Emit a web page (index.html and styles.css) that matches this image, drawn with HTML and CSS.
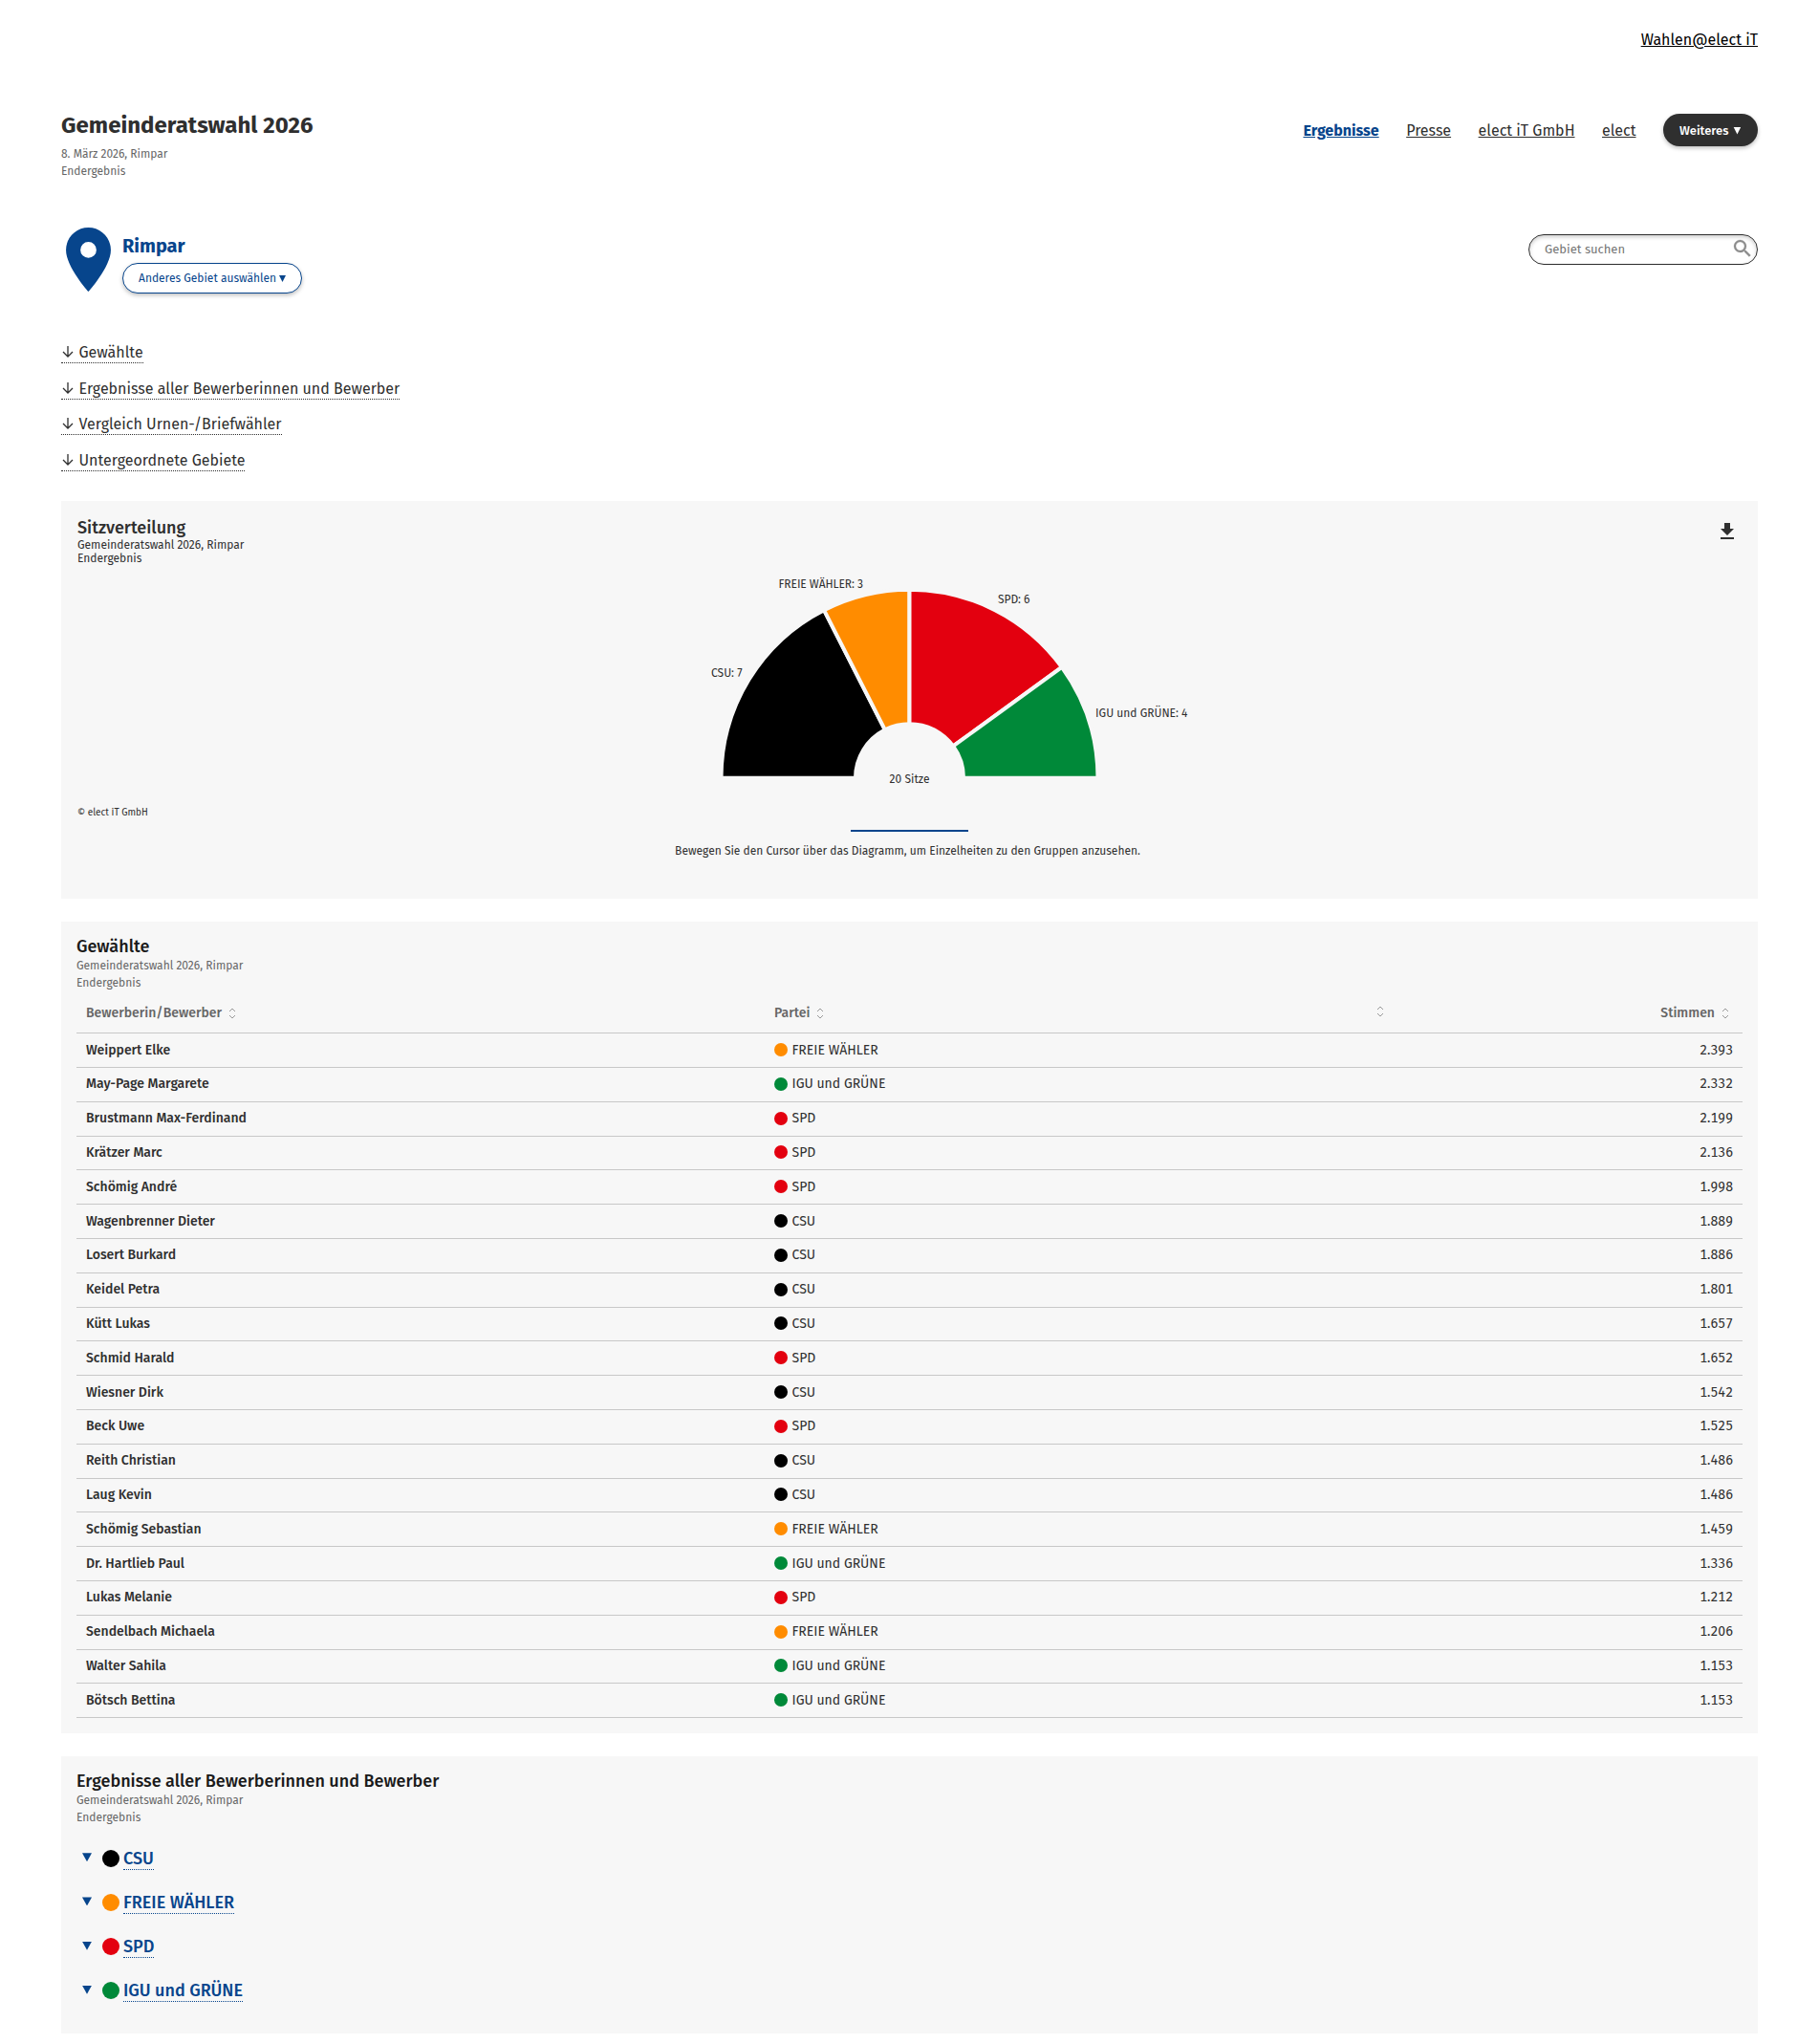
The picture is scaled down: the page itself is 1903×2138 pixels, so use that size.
FILE: index.html
```html
<!DOCTYPE html>
<html lang="de">
<head>
    <meta charset="UTF-8">
    <meta name="viewport" content="width=device-width, initial-scale=1.0">
    <title>Gemeinderatswahl 2026 - Rimpar</title>
    <link rel="stylesheet" href="styles.css">
</head>
<body>
    <div class="topbar"><a href="#">Wahlen@elect iT</a></div>

    <header class="header">
        <div>
            <h1>Gemeinderatswahl 2026</h1>
            <p class="sub">8. März 2026, Rimpar<br>Endergebnis</p>
        </div>
        <nav class="nav">
            <a href="#" class="active">Ergebnisse</a>
            <a href="#">Presse</a>
            <a href="#">elect iT GmbH</a>
            <a href="#">elect</a>
            <button class="more">Weiteres <span class="tri"></span></button>
        </nav>
    </header>

    <div class="area">
        <svg class="pin" viewBox="5 2 14 20"><path d="M12 2C8.13 2 5 5.13 5 9c0 5.25 7 13 7 13s7-7.75 7-13c0-3.87-3.13-7-7-7zm0 9.5a2.5 2.5 0 0 1 0-5 2.5 2.5 0 0 1 0 5z"/></svg>
        <div class="area-name">
            <h2>Rimpar</h2>
            <button class="choose">Anderes Gebiet auswählen <span class="tri"></span></button>
        </div>
        <div class="search">
            <input type="text" placeholder="Gebiet suchen">
            <svg viewBox="0 0 24 24"><path d="M15.5 14h-.79l-.28-.27A6.47 6.47 0 0 0 16 9.5 6.5 6.5 0 1 0 9.5 16c1.61 0 3.09-.59 4.23-1.57l.27.28v.79l5 4.99L20.49 19l-4.99-5zm-6 0C7.01 14 5 11.99 5 9.5S7.01 5 9.5 5 14 7.01 14 9.5 11.99 14 9.5 14z"/></svg>
        </div>
    </div>

    <ul class="jump">
        <li><a href="#gewaehlte"><svg viewBox="0 0 12 12"><path d="M6 0v11M1 6l5 5 5-5"/></svg>Gewählte</a></li>
        <li><a href="#bewerber"><svg viewBox="0 0 12 12"><path d="M6 0v11M1 6l5 5 5-5"/></svg>Ergebnisse aller Bewerberinnen und Bewerber</a></li>
        <li><a href="#"><svg viewBox="0 0 12 12"><path d="M6 0v11M1 6l5 5 5-5"/></svg>Vergleich Urnen-/Briefwähler</a></li>
        <li><a href="#"><svg viewBox="0 0 12 12"><path d="M6 0v11M1 6l5 5 5-5"/></svg>Untergeordnete Gebiete</a></li>
    </ul>

    <section class="panel seats">
        <div class="seats-head">
            <div>
                <h3>Sitzverteilung</h3>
                <p>Gemeinderatswahl 2026, Rimpar<br>Endergebnis</p>
            </div>
            <svg class="download" viewBox="0 0 24 24"><path d="M19 9h-4V3H9v6H5l7 7 7-7zM5 18v2h14v-2H5z"/></svg>
        </div>
        <svg class="chart" viewBox="0 0 520 240">
            <g id="slices" stroke="#f7f7f7" stroke-width="4"></g>
            <text x="122.5" y="20" textLength="88.5">FREIE WÄHLER: 3</text>
            <text x="352" y="36" textLength="33.5">SPD: 6</text>
            <text x="52" y="113" textLength="32.5">CSU: 7</text>
            <text x="454" y="155" textLength="96.5">IGU und GRÜNE: 4</text>
            <text x="238.5" y="224" textLength="42">20 Sitze</text>
        </svg>
        <div class="copy">© elect iT GmbH</div>
        <div class="hint">Bewegen Sie den Cursor über das Diagramm, um Einzelheiten zu den Gruppen anzusehen.</div>
    </section>

    <section class="panel" id="gewaehlte">
        <h3>Gewählte</h3>
        <p class="sub">Gemeinderatswahl 2026, Rimpar<br>Endergebnis</p>
        <table>
            <thead>
                <tr>
                    <th class="c1">Bewerberin/Bewerber<svg class="sort" viewBox="0 0 8 12"><path d="M1 4l3-3 3 3M1 8l3 3 3-3"/></svg></th>
                    <th class="c2">Partei<svg class="sort" viewBox="0 0 8 12"><path d="M1 4l3-3 3 3M1 8l3 3 3-3"/></svg></th>
                    <th class="c3"><svg class="sort" viewBox="0 0 8 12"><path d="M1 4l3-3 3 3M1 8l3 3 3-3"/></svg></th>
                    <th class="c4">Stimmen<svg class="sort" viewBox="0 0 8 12"><path d="M1 4l3-3 3 3M1 8l3 3 3-3"/></svg></th>
                </tr>
            </thead>
            <tbody>
                <tr><th>Weippert Elke</th><td><i class="dot fw"></i>FREIE WÄHLER</td><td></td><td>2.393</td></tr>
                <tr><th>May-Page Margarete</th><td><i class="dot igu"></i>IGU und GRÜNE</td><td></td><td>2.332</td></tr>
                <tr><th>Brustmann Max-Ferdinand</th><td><i class="dot spd"></i>SPD</td><td></td><td>2.199</td></tr>
                <tr><th>Krätzer Marc</th><td><i class="dot spd"></i>SPD</td><td></td><td>2.136</td></tr>
                <tr><th>Schömig André</th><td><i class="dot spd"></i>SPD</td><td></td><td>1.998</td></tr>
                <tr><th>Wagenbrenner Dieter</th><td><i class="dot csu"></i>CSU</td><td></td><td>1.889</td></tr>
                <tr><th>Losert Burkard</th><td><i class="dot csu"></i>CSU</td><td></td><td>1.886</td></tr>
                <tr><th>Keidel Petra</th><td><i class="dot csu"></i>CSU</td><td></td><td>1.801</td></tr>
                <tr><th>Kütt Lukas</th><td><i class="dot csu"></i>CSU</td><td></td><td>1.657</td></tr>
                <tr><th>Schmid Harald</th><td><i class="dot spd"></i>SPD</td><td></td><td>1.652</td></tr>
                <tr><th>Wiesner Dirk</th><td><i class="dot csu"></i>CSU</td><td></td><td>1.542</td></tr>
                <tr><th>Beck Uwe</th><td><i class="dot spd"></i>SPD</td><td></td><td>1.525</td></tr>
                <tr><th>Reith Christian</th><td><i class="dot csu"></i>CSU</td><td></td><td>1.486</td></tr>
                <tr><th>Laug Kevin</th><td><i class="dot csu"></i>CSU</td><td></td><td>1.486</td></tr>
                <tr><th>Schömig Sebastian</th><td><i class="dot fw"></i>FREIE WÄHLER</td><td></td><td>1.459</td></tr>
                <tr><th>Dr. Hartlieb Paul</th><td><i class="dot igu"></i>IGU und GRÜNE</td><td></td><td>1.336</td></tr>
                <tr><th>Lukas Melanie</th><td><i class="dot spd"></i>SPD</td><td></td><td>1.212</td></tr>
                <tr><th>Sendelbach Michaela</th><td><i class="dot fw"></i>FREIE WÄHLER</td><td></td><td>1.206</td></tr>
                <tr><th>Walter Sahila</th><td><i class="dot igu"></i>IGU und GRÜNE</td><td></td><td>1.153</td></tr>
                <tr><th>Bötsch Bettina</th><td><i class="dot igu"></i>IGU und GRÜNE</td><td></td><td>1.153</td></tr>
            </tbody>
        </table>
    </section>

    <section class="panel" id="bewerber">
        <h3>Ergebnisse aller Bewerberinnen und Bewerber</h3>
        <p class="sub">Gemeinderatswahl 2026, Rimpar<br>Endergebnis</p>
        <ul class="parties">
            <li><span class="tri"></span><i class="dot csu"></i><a href="#">CSU</a></li>
            <li><span class="tri"></span><i class="dot fw"></i><a href="#">FREIE WÄHLER</a></li>
            <li><span class="tri"></span><i class="dot spd"></i><a href="#">SPD</a></li>
            <li><span class="tri"></span><i class="dot igu"></i><a href="#">IGU und GRÜNE</a></li>
        </ul>
    </section>

    <script>
        const seats = [[7, '#000'], [3, '#ff8c00'], [6, '#e3000f'], [4, '#008939']];
        const cx = 259.5, cy = 218.7, outer = 197, inner = 56.5;
        let sum = 0;

        function point(r, n) {
            const a = Math.PI * (1 - n / 20);
            return (cx + r * Math.cos(a)) + ' ' + (cy - r * Math.sin(a));
        }

        seats.forEach(([n, color]) => {
            const path = document.createElementNS('http://www.w3.org/2000/svg', 'path');
            path.setAttribute('fill', color);
            path.setAttribute('d', `M${point(inner, sum)}L${point(outer, sum)}A${outer} ${outer} 0 0 1 ${point(outer, sum + n)}L${point(inner, sum + n)}A${inner} ${inner} 0 0 0 ${point(inner, sum)}Z`);
            document.getElementById('slices').appendChild(path);
            sum += n;
        });
    </script>
</body>
</html>
```
FILE: styles.css
```css
* {
    box-sizing: border-box;
}

body {
    margin: 0;
    padding: 0 64px;
    font-family: "Fira Sans", "Noto Sans", sans-serif;
    font-size: 16px;
    line-height: 24px;
    color: #2f2f2f;
    background: #fff;
}

h1, h2, h3, p, ul {
    margin: 0;
    padding: 0;
}

ul {
    list-style: none;
}

a {
    color: inherit;
}

button, input {
    font: inherit;
}

.topbar {
    padding-top: 30px;
    height: 114px;
    text-align: right;
}

.topbar a {
    color: #000;
}

.header {
    display: flex;
    justify-content: space-between;
    height: 125px;
}

h1 {
    font-size: 24px;
    line-height: 34px;
    font-weight: 700;
    letter-spacing: 0.04px;
}

.sub {
    padding-top: 1px;
    font-size: 12px;
    line-height: 18px;
    color: #666;
}

.header .sub {
    margin-top: 3px;
}

.nav {
    display: flex;
    align-items: center;
    align-self: flex-start;
    gap: 28.5px;
    height: 34px;
    margin-top: 5px;
}

.nav a {
    padding-top: 1px;
}

.nav .active {
    color: #07458c;
    font-weight: 700;
}

.more, .choose {
    display: flex;
    align-items: center;
    gap: 5px;
    padding: 0 16px;
    border-radius: 17px;
    font-size: 13px;
    white-space: nowrap;
    box-shadow: 0 2px 4px rgba(0, 0, 0, 0.25);
}

.more {
    width: 99px;
    height: 34px;
    padding: 1px 0 0 17px;
    border: none;
    background: #2f2f2f;
    color: #fff;
    font-weight: 500;
}

.tri {
    flex: none;
    width: 8px;
    height: 8px;
    background: currentColor;
    clip-path: polygon(0 0, 100% 0, 50% 100%);
}

.area {
    display: flex;
    height: 116px;
}

.pin {
    width: 47px;
    height: 67px;
    margin: -1px 12.5px 0 4.5px;
    fill: #07458c;
}

.area-name {
    flex: 1;
    color: #07458c;
}

h2 {
    padding-top: 3px;
    font-size: 20px;
    line-height: 30px;
    font-weight: 700;
}

.choose {
    gap: 3px;
    width: 188px;
    height: 32px;
    margin-top: 3px;
    border: 1px solid #07458c;
    background: #fff;
    color: #07458c;
    font-size: 12px;
}

.choose .tri {
    width: 7px;
    height: 7px;
    margin-top: 1px;
}

.search {
    display: flex;
    align-items: center;
    width: 240px;
    height: 32px;
    margin-top: 6px;
    padding: 0 14px 0 16px;
    border: 1px solid #2f2f2f;
    border-radius: 16px;
    box-shadow: inset 0 2px 4px rgba(0, 0, 0, 0.2);
}

.search input {
    flex: 1;
    min-width: 0;
    padding: 0;
    border: none;
    background: none;
    font-size: 13px;
}

.search input::placeholder {
    color: #757575;
}

.search svg {
    width: 24px;
    height: 24px;
    margin: -2px -11px 0 0;
    fill: #8c8c8c;
    stroke: #8c8c8c;
    stroke-width: 0.3;
}

.jump li {
    height: 37.6px;
    padding-top: 2px;
}

.jump a, .parties a {
    display: inline-block;
    border-bottom: 1px dotted currentColor;
    text-decoration: none;
}

.jump a {
    height: 22px;
    line-height: 22px;
}

.jump svg {
    width: 12px;
    height: 12px;
    margin: 0 5.5px 0 1px;
    fill: none;
    stroke: currentColor;
    stroke-width: 1.3;
}

.panel {
    margin-bottom: 24px;
    padding: 16px;
    background: #f7f7f7;
}

.seats {
    height: 416px;
    margin-top: 18.6px;
}

.seats-head {
    display: flex;
    justify-content: space-between;
    height: 76px;
    padding-left: 1px;
}

h3 {
    font-size: 18px;
    line-height: 20px;
    font-weight: 500;
    color: #1a1a1a;
}

.seats h3 {
    padding-top: 2px;
    margin-bottom: 1px;
    color: #2f2f2f;
}

.seats p {
    font-size: 12px;
    line-height: 14px;
}

.download {
    width: 24px;
    height: 24px;
    margin-top: 4px;
    margin-right: 4px;
    fill: #2f2f2f;
}

.chart {
    display: block;
    width: 520px;
    height: 240px;
    margin: -21px auto 0;
    overflow: visible;
    font-size: 12px;
    fill: #2f2f2f;
}

.copy {
    margin-left: 1px;
    font-size: 10px;
    line-height: 14px;
    padding-top: 8px;
}

.hint {
    position: relative;
    padding: 24px 4px 0 0;
    font-size: 12px;
    line-height: 18px;
    text-align: center;
}

.hint::before {
    content: "";
    position: absolute;
    top: 11px;
    left: calc(50% - 61.5px);
    width: 123px;
    height: 2px;
    background: #07458c;
}

table {
    width: 100%;
    border-collapse: collapse;
    table-layout: fixed;
    font-size: 14px;
    line-height: 20px;
}

th, td {
    height: 35.8px;
    padding: 0 10px;
    border-bottom: 1px solid #c8c8c8;
    text-align: left;
}

th {
    font-weight: 500;
}

thead th {
    height: 43.8px;
    padding-top: 2px;
    color: #666;
}

.c1 {
    width: 720px;
}

.c2 {
    width: 630px;
}

th.c4, td:last-child {
    text-align: right;
    font-variant-numeric: tabular-nums;
}

.sort {
    width: 8px;
    height: 12px;
    margin: 0 4px 0 7px;
    vertical-align: -2px;
    fill: none;
    stroke: #999;
}

.c3 .sort {
    margin-left: 0;
    vertical-align: 0;
}

.dot {
    display: inline-block;
    width: 14px;
    height: 14px;
    margin-right: 4.5px;
    border-radius: 50%;
    vertical-align: -2.3px;
}

.csu {
    background: #000;
}

.fw {
    background: #ff8c00;
}

.spd {
    background: #e3000f;
}

.igu {
    background: #008939;
}

.parties {
    height: 201px;
    padding: 10.5px 0 0 6px;
}

.parties li {
    display: flex;
    align-items: center;
    height: 46.2px;
    color: #07458c;
    font-size: 18px;
    font-weight: 500;
}

.parties a {
    height: 24px;
}

.parties .tri {
    width: 10px;
    height: 9px;
    margin: -2px 11px 0 0;
}

.parties .dot {
    width: 18px;
    height: 18px;
    margin-right: 4px;
}
```
